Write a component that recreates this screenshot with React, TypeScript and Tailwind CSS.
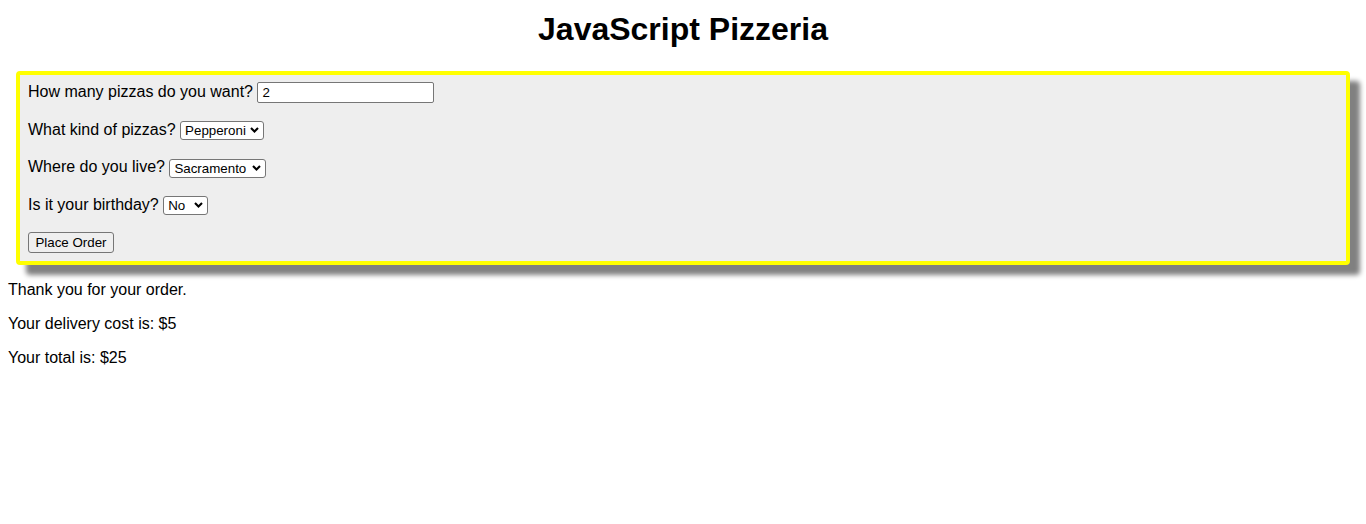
import React from "react";

const ff = { fontFamily: '"Liberation Sans", Arial, sans-serif' };

function Chevron() {
  return (
    <svg
      className="pointer-events-none absolute right-[5px] top-1/2 -translate-y-1/2"
      width="9"
      height="7"
      viewBox="0 0 9 7"
    >
      <path d="M1 1.5 L4.5 5 L8 1.5" fill="none" stroke="#000" strokeWidth="2.1" />
    </svg>
  );
}

function Select({ value, options, width }: { value: string; options: string[]; width: string }) {
  return (
    <span className={`relative inline-block align-middle ${width}`}>
      <select
        defaultValue={value}
        className="h-[19px] w-full appearance-none rounded-[3px] border border-[#767676] bg-white pl-[4px] pr-[14px] text-[13.333px] leading-[17px] text-black outline-none"
        style={ff}
      >
        {options.map((o) => (
          <option key={o}>{o}</option>
        ))}
      </select>
      <Chevron />
    </span>
  );
}

export default function App() {
  return (
    <div className="m-0 min-h-[524px] bg-white px-2 text-[16px] text-black" style={ff}>
      <h1 className="mb-[23px] mt-[11px] text-center text-[32px] font-bold leading-[37px]">
        JavaScript Pizzeria
      </h1>
      <div className="mx-2 flex flex-col gap-[16.5px] rounded-[4px] border-4 border-[#ffff00] bg-[#eeeeee] px-2 pb-[7.5px] pt-[7px] shadow-[10px_10px_5px_#808080]">
        <div className="flex h-[21px] items-center">
          <span className="-mt-[1px] leading-[18px]">How many pizzas do you want?&nbsp;</span>
          <input
            type="text"
            defaultValue="2"
            className="h-[21px] w-[177px] rounded-[2px] border border-[#767676] bg-white px-[4px] text-[13.333px] text-black outline-none"
            style={ff}
          />
        </div>
        <div className="flex h-[21px] items-center">
          <span className="-mt-[1px] leading-[18px]">What kind of pizzas?&nbsp;</span>
          <Select value="Pepperoni" options={["Pepperoni", "Cheese", "Veggie"]} width="w-[84px]" />
        </div>
        <div className="flex h-[21px] items-center">
          <span className="-mt-[1px] leading-[18px]">Where do you live?&nbsp;</span>
          <Select value="Sacramento" options={["Sacramento", "Davis", "Other"]} width="w-[97px]" />
        </div>
        <div className="flex h-[21px] items-center">
          <span className="-mt-[1px] leading-[18px]">Is it your birthday?&nbsp;</span>
          <Select value="No" options={["No", "Yes"]} width="w-[45px]" />
        </div>
        <div className="flex h-[21px] items-center">
          <button
            className="h-[21px] w-[86px] rounded-[3px] border border-[#767676] bg-[#efefef] px-[6px] text-[13.333px] leading-[17px] text-black"
            style={ff}
          >
            Place Order
          </button>
        </div>
      </div>
      <div className="mt-[16px] flex flex-col gap-[16px] leading-[18px]">
        <p>Thank you for your order.</p>
        <p>Your delivery cost is: $5</p>
        <p>Your total is: $25</p>
      </div>
    </div>
  );
}
